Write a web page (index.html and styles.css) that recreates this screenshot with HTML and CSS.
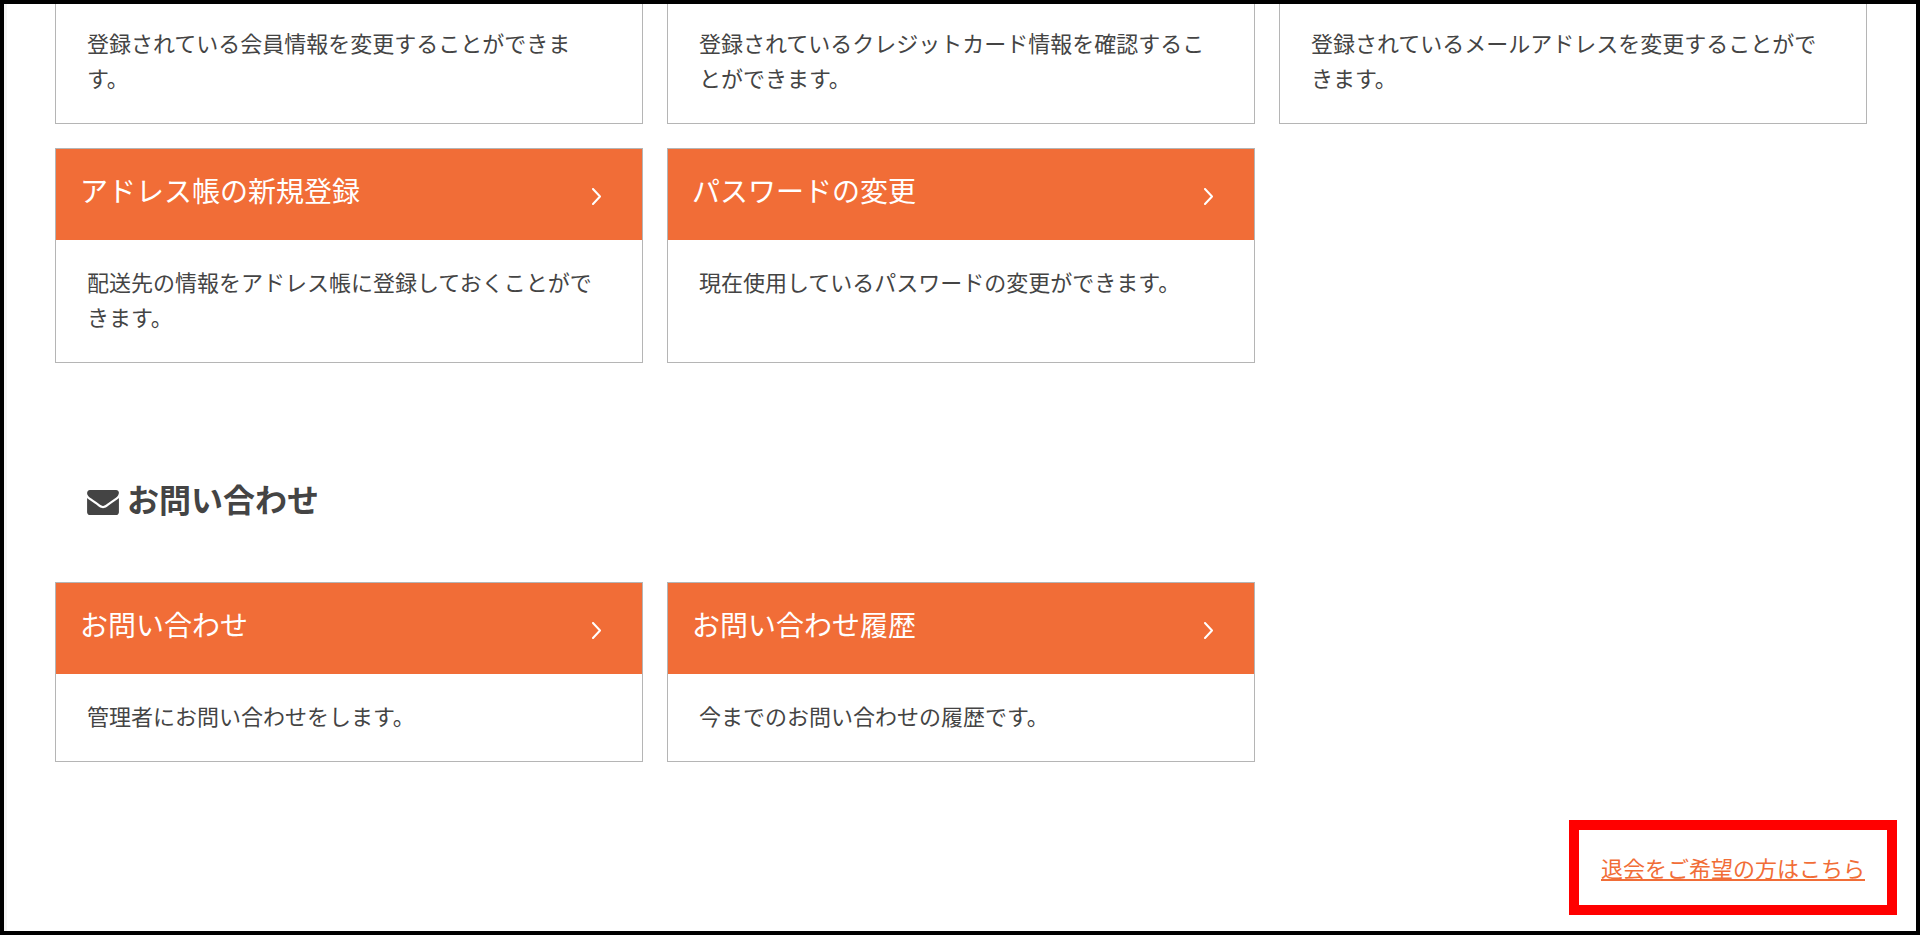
FILE: index.html
```html
<!DOCTYPE html>
<html lang="ja">
<head>
    <meta charset="UTF-8">
    <meta name="viewport" content="width=device-width, initial-scale=1.0">
    <title>マイページ</title>
    <link rel="stylesheet" href="styles.css">
</head>
<body>
    <main class="mypage">
        <!-- 会員情報 -->
        <section class="menu">
            <div class="card card-open">
                <p class="card-text">登録されている会員情報を変更することができます。</p>
            </div>
            <div class="card card-open">
                <p class="card-text">登録されているクレジットカード情報を確認することができます。</p>
            </div>
            <div class="card card-open">
                <p class="card-text">登録されているメールアドレスを変更することができます。</p>
            </div>
            <div class="card">
                <a href="#" class="card-title">
                    アドレス帳の新規登録
                    <svg class="arrow" viewBox="0 0 10 17"><path d="M1 1l7 7.5L1 16"/></svg>
                </a>
                <p class="card-text">配送先の情報をアドレス帳に登録しておくことができます。</p>
            </div>
            <div class="card">
                <a href="#" class="card-title">
                    パスワードの変更
                    <svg class="arrow" viewBox="0 0 10 17"><path d="M1 1l7 7.5L1 16"/></svg>
                </a>
                <p class="card-text">現在使用しているパスワードの変更ができます。</p>
            </div>
        </section>

        <!-- お問い合わせ -->
        <h2 class="heading">
            <svg class="mail" viewBox="0 256 1792 1408"><path d="M1792 710v794q0 66-47 113t-113 47h-1472q-66 0-113-47t-47-113v-794q44 49 101 87 362 246 497 345 57 42 92.5 65.5t94.5 48 110 24.5h2q51 0 110-24.5t94.5-48 92.5-65.5q170-123 498-345 57-39 100-87zm0-294q0 79-49 151t-122 123q-376 261-468 325-10 7-42.5 31t-54 38.5-52 32.5-57.5 27-50 9h-2q-23 0-50-9t-57.5-27-52-32.5-54-38.5-42.5-31q-91-64-262-182.5t-205-142.5q-62-42-117-115.5t-55-136.5q0-78 41.5-130t118.5-52h1472q65 0 112.5 47t47.5 113z"/></svg>
            お問い合わせ
        </h2>
        <section class="menu">
            <div class="card">
                <a href="#" class="card-title">
                    お問い合わせ
                    <svg class="arrow" viewBox="0 0 10 17"><path d="M1 1l7 7.5L1 16"/></svg>
                </a>
                <p class="card-text">管理者にお問い合わせをします。</p>
            </div>
            <div class="card">
                <a href="#" class="card-title">
                    お問い合わせ履歴
                    <svg class="arrow" viewBox="0 0 10 17"><path d="M1 1l7 7.5L1 16"/></svg>
                </a>
                <p class="card-text">今までのお問い合わせの履歴です。</p>
            </div>
        </section>

        <div class="withdraw">
            <a href="#" class="withdraw-link">退会をご希望の方はこちら</a>
        </div>
    </main>
</body>
</html>
```
FILE: styles.css
```css
* {
    box-sizing: border-box;
}
body {
    margin: 0;
    font-family: 'Noto Sans CJK JP', sans-serif;
    font-size: 22px;
    line-height: 35px;
    color: #444;
    background-color: #fff;
}
.mypage {
    min-height: 100vh;
    padding: 0 49px 40px 51px;
    border: 4px solid #000;
    box-shadow: inset 3px 0 #f5f5f5;
}
.menu {
    display: grid;
    grid-template-columns: repeat(3, 1fr);
    gap: 24px;
}
.card {
    border: 1px solid #b5b5b5;
}
.card-open {
    border-top: none;
}
.card-title {
    display: flex;
    justify-content: space-between;
    align-items: center;
    padding: 23px 40px 32px 24px;
    font-size: 28px;
    line-height: 36px;
    color: #fff;
    background-color: #f16d37;
    text-decoration: none;
}
.arrow {
    width: 10px;
    height: 17px;
    margin-top: 12px;
    fill: none;
    stroke: #fff;
    stroke-width: 2;
    stroke-linecap: round;
    stroke-linejoin: round;
}
.card-text {
    margin: 0;
    padding: 24px 31px 28px;
}
.card-open .card-text {
    padding-top: 21px;
}
.heading {
    display: flex;
    align-items: center;
    gap: 8px;
    margin: 115px 0 64px;
    padding-left: 32px;
    font-size: 32px;
    line-height: 40px;
}
.mail {
    width: 32px;
    height: 25px;
    margin-top: 8px;
    fill: #444;
}
.withdraw {
    margin-top: 88px;
    text-align: right;
}
.withdraw-link {
    display: inline-block;
    padding: 0 2px;
    color: #f16d37;
    outline: 10px solid #f00;
    outline-offset: 20px;
}
```
